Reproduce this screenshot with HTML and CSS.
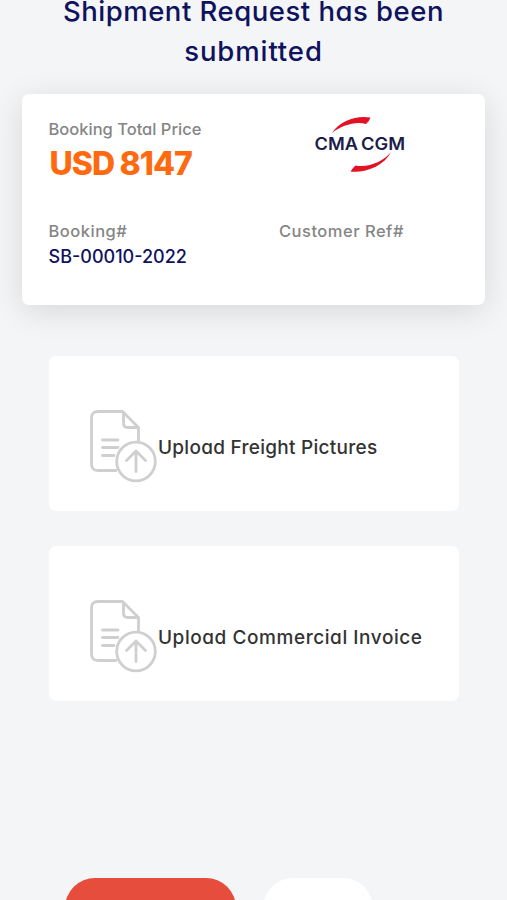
FILE: index.html
```html
<!DOCTYPE html>
<html lang="en">
<head>
<meta charset="utf-8">
<meta name="viewport" content="width=device-width, initial-scale=1">
<title>Shipment Request</title>
<link rel="stylesheet" href="styles.css">
</head>
<body>
<svg class="symbols" aria-hidden="true">
  <symbol id="upload" viewBox="0 0 68 74">
    <g fill="none" stroke="#cfcfcf" stroke-width="2.8" stroke-linecap="round" stroke-linejoin="round">
      <path d="M27 61.500H9Q2.500 61.500 2.500 55V9Q2.500 2.500 9 2.500H33.500L49.500 18.500V33M34.500 3.500V14Q34.500 18.500 39 18.500H49M13.500 31H29M13.500 38.500H29M13.500 46.500H25"/>
      <circle cx="47" cy="52.500" r="19.300" fill="#fff"/>
      <path d="M47 62.500V42.500M37.500 51.500L47 42L56.500 51.500"/>
    </g>
  </symbol>
</svg>
<main class="page">
  <h1 class="title"><span class="title-first">Shipment Request has been</span><br><span class="title-last">submitted</span></h1>
  <section class="summary">
    <div class="price-block">
      <p class="label">Booking Total Price</p>
      <p class="price">USD 8147</p>
    </div>
    <svg class="carrier" viewBox="0 0 96 60" role="img" aria-label="CMA CGM">
      <path fill="#e01223" d="M20 19C28 6 46 1 58.500 3.500Q57.500 7 54 10C43 7 29 12 20 19Z"/>
      <path fill="#e01223" d="M79 38C72 52 54 59 38.500 57.500Q40.500 54 43.500 51.500C57 54 72 47 79 38Z"/>
      <text class="carrier-name" x="2.500" y="36" textLength="43.500" lengthAdjust="spacingAndGlyphs">CMA</text>
      <text class="carrier-name" x="49" y="36" textLength="44" lengthAdjust="spacingAndGlyphs">CGM</text>
    </svg>
    <div class="booking">
      <p class="label label-short">Booking#</p>
      <p class="number">SB-00010-2022</p>
    </div>
    <p class="label label-short">Customer Ref#</p>
  </section>
  <div class="uploads">
    <div class="upload"><svg class="upload-icon"><use href="#upload"/></svg><span class="upload-text freight">Upload Freight Pictures</span></div>
    <div class="upload"><svg class="upload-icon"><use href="#upload"/></svg><span class="upload-text invoice">Upload Commercial Invoice</span></div>
  </div>
  <div class="actions">
    <button class="action primary">Send Email</button>
    <button class="action secondary"></button>
  </div>
</main>
</body>
</html>
```
FILE: styles.css
```css
* { box-sizing: border-box; }
html, body { height: 100%; overflow: hidden; }
body { margin: 0; background: #f3f5f7; font-family: Inter, "Open Sans", sans-serif; font-feature-settings: "cv11"; }
p, h1 { margin: 0; }
.symbols { display: none; }
.page { height: 900px; overflow: hidden; }
.title { height: 103px; margin-top: -9px; color: #0f125d; font-size: 27.5px; line-height: 40px; font-weight: 500; text-align: center; white-space: nowrap; }
.title-first { letter-spacing: .5px; }
.title-last { letter-spacing: .9px; }
.summary { display: grid; grid-template-columns: 230.5px 1fr; grid-template-rows: 102px 1fr; width: 463px; height: 211px; margin: 0 0 0 22px; padding: 23px 26.5px; background: #fff; border-radius: 7px; box-shadow: 0 6px 32px rgba(0, 0, 0, .12); }
.label { color: #858585; font-size: 16.5px; line-height: 24px; font-weight: 500; white-space: nowrap; }
.label-short { letter-spacing: .5px; }
.price { color: #ff690f; padding-left: 1px; font-size: 32px; line-height: 45px; font-weight: 800; letter-spacing: -.9px; word-spacing: -1px; white-space: nowrap; }
.carrier { width: 96px; height: 60px; margin: -3px 0 0 33px; }
.carrier-name { fill: #1c1d49; font: 600 17.5px Inter, sans-serif; }
.number { color: #0f125d; font-size: 18px; line-height: 28px; font-weight: 500; white-space: nowrap; }
.uploads { display: grid; gap: 35px; width: 410px; margin: 51px 0 0 49px; }
.upload { display: flex; align-items: center; height: 155px; padding-left: 40px; background: #fff; border-radius: 7px; }
.upload-icon { flex: none; width: 68px; height: 74px; margin-top: 25px; }
.upload-text { margin: 28px 0 0 1px; color: #333; font-size: 19px; line-height: 28px; font-weight: 500; white-space: nowrap; }
.freight { letter-spacing: .27px; }
.invoice { letter-spacing: .56px; }
.actions { display: flex; gap: 27px; margin: 177px 0 0 65px; }
.action { height: 60px; padding: 0; border: 0; border-radius: 30px; font: 500 19px Inter, sans-serif; }
.primary { width: 171px; background: #e74d3c; color: #fff; }
.secondary { width: 110px; background: #fff; }
```
